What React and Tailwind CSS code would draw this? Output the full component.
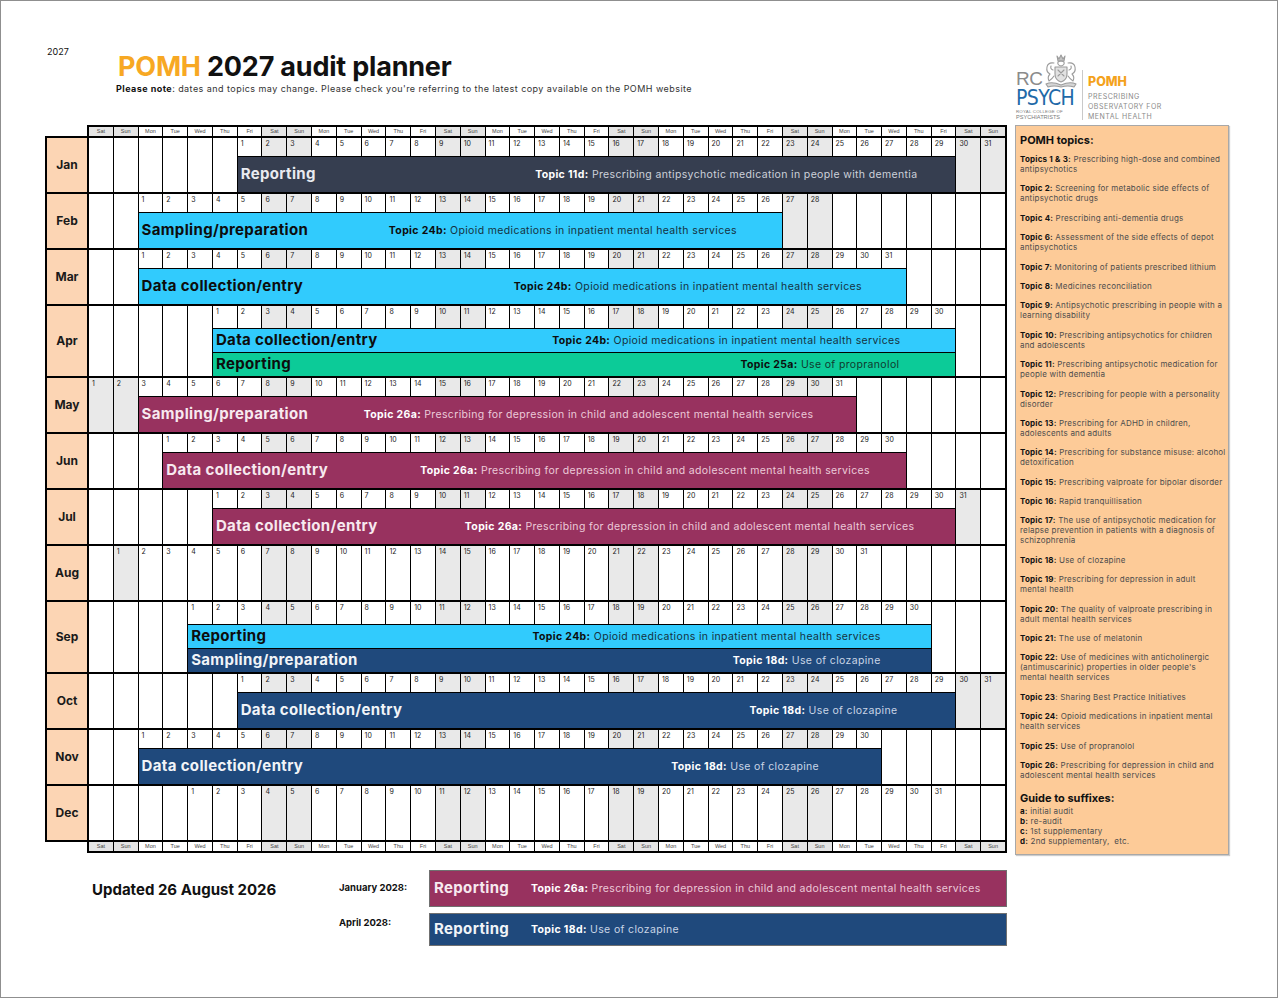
const DAYS = ['Sat', 'Sun', 'Mon', 'Tue', 'Wed', 'Thu', 'Fri']
const COLS = Array.from({ length: 37 }, (_, i) => DAYS[i % 7])
const weekend = (i) => i % 7 < 2

const TONES = {
  slate: { bg: 'bg-[#363e50]', label: 'text-[#e9ebf0]', topic: 'text-white', desc: 'text-[#cdd1da]' },
  sky: { bg: 'bg-[#31cbfd]', label: 'text-[#0d0d0d]', topic: 'text-[#0d0d0d]', desc: 'text-[#15323f]' },
  mint: { bg: 'bg-[#0ccb98]', label: 'text-[#0d0d0d]', topic: 'text-[#0d0d0d]', desc: 'text-[#0f3a2e]' },
  plum: { bg: 'bg-[#98325f]', label: 'text-[#f7e9ef]', topic: 'text-white', desc: 'text-[#eccad9]' },
  navy: { bg: 'bg-[#1f497c]', label: 'text-[#f1f4f8]', topic: 'text-white', desc: 'text-[#c9d5e6]' },
}

const T11 = ['Topic 11d:', 'Prescribing antipsychotic medication in people with dementia']
const T24 = ['Topic 24b:', 'Opioid medications in inpatient mental health services']
const T25 = ['Topic 25a:', 'Use of propranolol']
const T26 = ['Topic 26a:', 'Prescribing for depression in child and adolescent mental health services']
const T18 = ['Topic 18d:', 'Use of clozapine']

const months = [
  { name: 'Jan', start: 6, days: 31, from: 6, to: 34, bars: [{ span: 'col-span-29', tone: 'slate', label: 'Reporting', topic: T11, pr: 'pr-[38px]' }] },
  { name: 'Feb', start: 2, days: 28, from: 2, to: 27, bars: [{ span: 'col-span-26', tone: 'sky', label: 'Sampling/preparation', topic: T24, pr: 'pr-[45px]' }] },
  { name: 'Mar', start: 2, days: 31, from: 2, to: 32, bars: [{ span: 'col-span-31', tone: 'sky', label: 'Data collection/entry', topic: T24, pr: 'pr-[44px]' }] },
  {
    name: 'Apr', start: 5, days: 30, from: 5, to: 34, bars: [
      { span: 'col-span-30', tone: 'sky', label: 'Data collection/entry', topic: T24, pr: 'pr-[55px]' },
      { span: 'col-span-30', tone: 'mint', label: 'Reporting', topic: T25, pr: 'pr-[56px]' },
    ],
  },
  { name: 'May', start: 0, days: 31, from: 2, to: 30, bars: [{ span: 'col-span-29', tone: 'plum', label: 'Sampling/preparation', topic: T26, pr: 'pr-[43px]' }] },
  { name: 'Jun', start: 3, days: 30, from: 3, to: 32, bars: [{ span: 'col-span-30', tone: 'plum', label: 'Data collection/entry', topic: T26, pr: 'pr-[36px]' }] },
  { name: 'Jul', start: 5, days: 31, from: 5, to: 34, bars: [{ span: 'col-span-30', tone: 'plum', label: 'Data collection/entry', topic: T26, pr: 'pr-[41px]' }] },
  { name: 'Aug', start: 1, days: 31, from: 99, to: -1, bars: [] },
  {
    name: 'Sep', start: 4, days: 30, from: 4, to: 33, bars: [
      { span: 'col-span-30', tone: 'sky', label: 'Reporting', topic: T24, pr: 'pr-[50px]' },
      { span: 'col-span-30', tone: 'navy', label: 'Sampling/preparation', topic: T18, pr: 'pr-[50px]' },
    ],
  },
  { name: 'Oct', start: 6, days: 31, from: 6, to: 34, bars: [{ span: 'col-span-29', tone: 'navy', label: 'Data collection/entry', topic: T18, pr: 'pr-[58px]' }] },
  { name: 'Nov', start: 2, days: 30, from: 2, to: 31, bars: [{ span: 'col-span-30', tone: 'navy', label: 'Data collection/entry', topic: T18, pr: 'pr-[62px]' }] },
  { name: 'Dec', start: 4, days: 31, from: 99, to: -1, bars: [] },
]

const topics = [
  ['Topics 1 & 3:', ' Prescribing high-dose and combined', 'antipsychotics'],
  ['Topic 2:', ' Screening for metabolic side effects of', 'antipsychotic drugs'],
  ['Topic 4:', ' Prescribing anti-dementia drugs'],
  ['Topic 6:', ' Assessment of the side effects of depot', 'antipsychotics'],
  ['Topic 7:', ' Monitoring of patients prescribed lithium'],
  ['Topic 8:', ' Medicines reconciliation'],
  ['Topic 9:', ' Antipsychotic prescribing in people with a', 'learning disability'],
  ['Topic 10:', ' Prescribing antipsychotics for children', 'and adolescents'],
  ['Topic 11:', ' Prescribing antipsychotic medication for', 'people with dementia'],
  ['Topic 12:', ' Prescribing for people with a personality', 'disorder'],
  ['Topic 13:', ' Prescribing for ADHD in children,', 'adolescents and adults'],
  ['Topic 14:', ' Prescribing for substance misuse: alcohol', 'detoxification'],
  ['Topic 15:', ' Prescribing valproate for bipolar disorder'],
  ['Topic 16:', ' Rapid tranquillisation'],
  ['Topic 17:', ' The use of antipsychotic medication for', 'relapse prevention in patients with a diagnosis of', 'schizophrenia'],
  ['Topic 18:', ' Use of clozapine'],
  ['Topic 19', ': Prescribing for depression in adult', 'mental health'],
  ['Topic 20:', ' The quality of valproate prescribing in', 'adult mental health services'],
  ['Topic 21:', ' The use of melatonin'],
  ['Topic 22:', ' Use of medicines with anticholinergic', "(antimuscarinic) properties in older people's", 'mental health services'],
  ['Topic 23', ': Sharing Best Practice Initiatives'],
  ['Topic 24:', ' Opioid medications in inpatient mental', 'health services'],
  ['Topic 25:', ' Use of propranolol'],
  ['Topic 26:', ' Prescribing for depression in child and', 'adolescent mental health services'],
]

function DayHeader({ bottom }) {
  return (
    <div className={`ml-[42px] w-[920px] border-2 border-black bg-black grid grid-cols-[repeat(37,minmax(0,1fr))] gap-px ${bottom ? 'border-t-0' : 'border-b-0'}`}>
      {COLS.map((d, i) => (
        <div key={i} className={`h-[9px] text-center text-[5.5px] leading-[9px] text-[#444] font-['Liberation_Sans',Arial,sans-serif] ${weekend(i) ? 'bg-[#e4e4e4]' : 'bg-white'}`}>
          {d}
        </div>
      ))}
    </div>
  )
}

function Bar({ b }) {
  const t = TONES[b.tone]
  return (
    <div className={`${b.span} ${t.bg} ${b.pr} flex items-center pl-[3px] whitespace-nowrap overflow-hidden`}>
      <span className={`text-[15px] font-bold tracking-[0.35px] ${t.label}`}>{b.label}</span>
      <span className="ml-auto text-[10.5px] tracking-[0.35px]">
        <b className={`font-bold ${t.topic}`}>{b.topic[0]}</b> <span className={t.desc}>{b.topic[1]}</span>
      </span>
    </div>
  )
}

function MonthRow({ m }) {
  const double = m.bars.length > 1
  const full = double ? 'row-span-3' : 'row-span-2'
  return (
    <div className="flex gap-[2px]">
      <div className="w-[40px] shrink-0 bg-[#fcd5b4] flex items-center justify-center text-[12px] font-bold text-[#1a1a1a]">
        {m.name}
      </div>
      <div className={`flex-1 grid grid-cols-[repeat(37,minmax(0,1fr))] gap-px ${double ? 'grid-rows-[22px_23px_23px]' : 'grid-rows-[18px_35px]'}`}>
        {COLS.map((_, i) => {
          const day = i - m.start + 1
          const inMonth = day >= 1 && day <= m.days
          const covered = i >= m.from && i <= m.to
          return (
            <div
              key={i}
              className={`${covered ? '' : full} ${inMonth && weekend(i) ? 'bg-[#e9e9e9]' : 'bg-white'} pl-[3px] pt-[2px] text-[7px] leading-none text-[#222]`}
            >
              {inMonth ? day : ''}
            </div>
          )
        })}
        {m.bars.map((b, k) => (
          <Bar key={k} b={b} />
        ))}
      </div>
    </div>
  )
}

function FooterBar({ tone, topic }) {
  const t = TONES[tone]
  return (
    <div className={`${t.bg} border border-[#707070] flex items-center pl-[4px] whitespace-nowrap`}>
      <span className={`w-[97px] text-[15px] font-bold tracking-[0.35px] ${t.label}`}>Reporting</span>
      <span className="text-[10.5px] tracking-[0.35px]">
        <b className="font-bold text-white">{topic[0]}</b> <span className={t.desc}>{topic[1]}</span>
      </span>
    </div>
  )
}

function Crest() {
  return (
    <svg width="36" height="34" viewBox="0 0 36 34" fill="none" stroke="#9b9b9b" strokeWidth="1.1" strokeLinecap="round" strokeLinejoin="round">
      <path d="M15 2 L17 5 L19 1 L21 5 L23 2 L22 7 H16 Z" fill="#c4c4c4" />
      <path d="M16 8 Q19 6 22 8 Q23 11 19 12 Q15 11 16 8 Z" />
      <path d="M13 13 H25 V20 Q25 26 19 28 Q13 26 13 20 Z" fill="#e2e2e2" />
      <path d="M16 16 L22 22 M22 16 L16 22" />
      <path d="M12 9 Q6 8 5 13 Q4 18 8 20 Q5 23 7 27 Q10 25 12 22" />
      <path d="M9 12 Q8 15 11 16" />
      <path d="M26 9 Q32 8 33 13 Q34 18 30 20 Q33 23 31 27 Q28 25 26 22" />
      <path d="M29 12 Q30 15 27 16" />
      <path d="M4 30 Q10 27 19 31 Q28 27 34 30 L32 33 Q26 31 19 33 Q12 31 6 33 Z" fill="#d6d6d6" />
    </svg>
  )
}

function Logo() {
  return (
    <div className="h-[124px] flex pt-[52px] pl-[1px]">
      <div className="flex flex-col w-[64px]">
        <div className="flex items-end h-[35px]">
          <span className="mb-[1px] text-[19px] leading-[16px] text-[#8b8b8b] font-['Liberation_Sans',Arial,sans-serif] tracking-[-0.5px]">RC</span>
          <Crest />
        </div>
        <span className="mt-[1px] text-[21px] leading-[18px] text-[#1f6aa8] font-['Liberation_Sans_Narrow','DejaVu_Sans_Condensed',sans-serif] tracking-[-0.6px]">
          PSYCH
        </span>
        <span className="mt-[2px] text-[4.4px] leading-[5px] text-[#7a7a7a] tracking-[0.2px] font-['Liberation_Sans',Arial,sans-serif]">ROYAL COLLEGE OF</span>
        <span className="text-[5.6px] leading-[6px] text-[#7a7a7a] font-['Liberation_Sans',Arial,sans-serif]">PSYCHIATRISTS</span>
      </div>
      <div className="w-px h-[50px] mt-[17px] ml-[2px] bg-[#c9c9c9]" />
      <div className="flex flex-col pl-[5px] pt-[23px]">
        <span className="text-[12.5px] leading-none font-extrabold text-[#f4a21c]">POMH</span>
        <span className="mt-[3px] text-[7px] leading-[10px] text-[#8a8a8a] tracking-[0.5px]">
          PRESCRIBING
          <br />
          OBSERVATORY FOR
          <br />
          MENTAL HEALTH
        </span>
      </div>
    </div>
  )
}

function TopicsPanel() {
  return (
    <div className="h-[730px] bg-[#fdcb98] border border-[#a8a8a8] shadow-[1px_1px_1px_rgba(0,0,0,0.2)] pl-[4px] pt-[7px] whitespace-nowrap">
      <div className="text-[11px] leading-[14px] font-bold text-[#111]">POMH topics:</div>
      <div className="mt-[7px] flex flex-col gap-[9.4px] text-[8px] tracking-[0.2px] leading-[10px] text-[#4d4d4d]">
        {topics.map(([label, first, ...rest]) => (
          <div key={label}>
            <b className="font-bold text-[#111]">{label}</b>
            {first}
            {rest.map((line) => (
              <div key={line}>{line}</div>
            ))}
          </div>
        ))}
      </div>
      <div className="mt-[11px] text-[11px] leading-[14px] font-bold text-[#111]">Guide to suffixes:</div>
      <div className="mt-[1px] text-[8px] tracking-[0.2px] leading-[10px] text-[#4d4d4d]">
        <div><b className="text-[#111]">a:</b> initial audit</div>
        <div><b className="text-[#111]">b:</b> re-audit</div>
        <div><b className="text-[#111]">c:</b> 1st supplementary</div>
        <div><b className="text-[#111]">d:</b> 2nd supplementary,&nbsp; etc.</div>
      </div>
    </div>
  )
}

export default function App() {
  return (
    <div className="w-[1278px] h-[998px] bg-white border border-[#8f8f8f] overflow-hidden font-['Inter','Noto_Sans',sans-serif] text-[#111]">
      <div className="flex">
        <div className="ml-[44px] w-[962px] shrink-0">
          <div className="h-[124px] flex flex-col">
            <div className="pt-[46px] pl-[2px] text-[9px] leading-[10px]">2027</div>
            <div className="pl-[73px] -mt-[5px] text-[27px] leading-[30px] font-bold tracking-[-0.2px]">
              <span className="text-[#f7a823]">POMH</span> 2027 audit planner
            </div>
            <div className="pl-[71px] mt-[2px] text-[9px] leading-[10px] tracking-[0.45px] text-[#333]">
              <b className="font-bold text-[#111]">Please note</b>: dates and topics may change. Please check you're referring to the latest copy available on the POMH website
            </div>
          </div>

          <DayHeader />
          <div className="w-[962px] border-2 border-black bg-black flex flex-col gap-[2px]">
            {months.map((m) => (
              <MonthRow key={m.name} m={m} />
            ))}
          </div>
          <DayHeader bottom />

          <div className="mt-[17px] grid grid-cols-[294px_90px_578px] grid-rows-[37px_33px] gap-y-[6px]">
            <div className="row-span-2 pl-[47px] pt-[11px] text-[15px] leading-[18px] font-bold">Updated 26 August 2026</div>
            <div className="flex items-center text-[9.5px] font-bold">January 2028:</div>
            <FooterBar tone="plum" topic={T26} />
            <div className="pt-[4px] text-[9.5px] leading-[12px] font-bold">April 2028:</div>
            <FooterBar tone="navy" topic={T18} />
          </div>
        </div>

        <div className="ml-[8px] w-[214px] shrink-0 flex flex-col">
          <Logo />
          <TopicsPanel />
        </div>
      </div>
    </div>
  )
}
